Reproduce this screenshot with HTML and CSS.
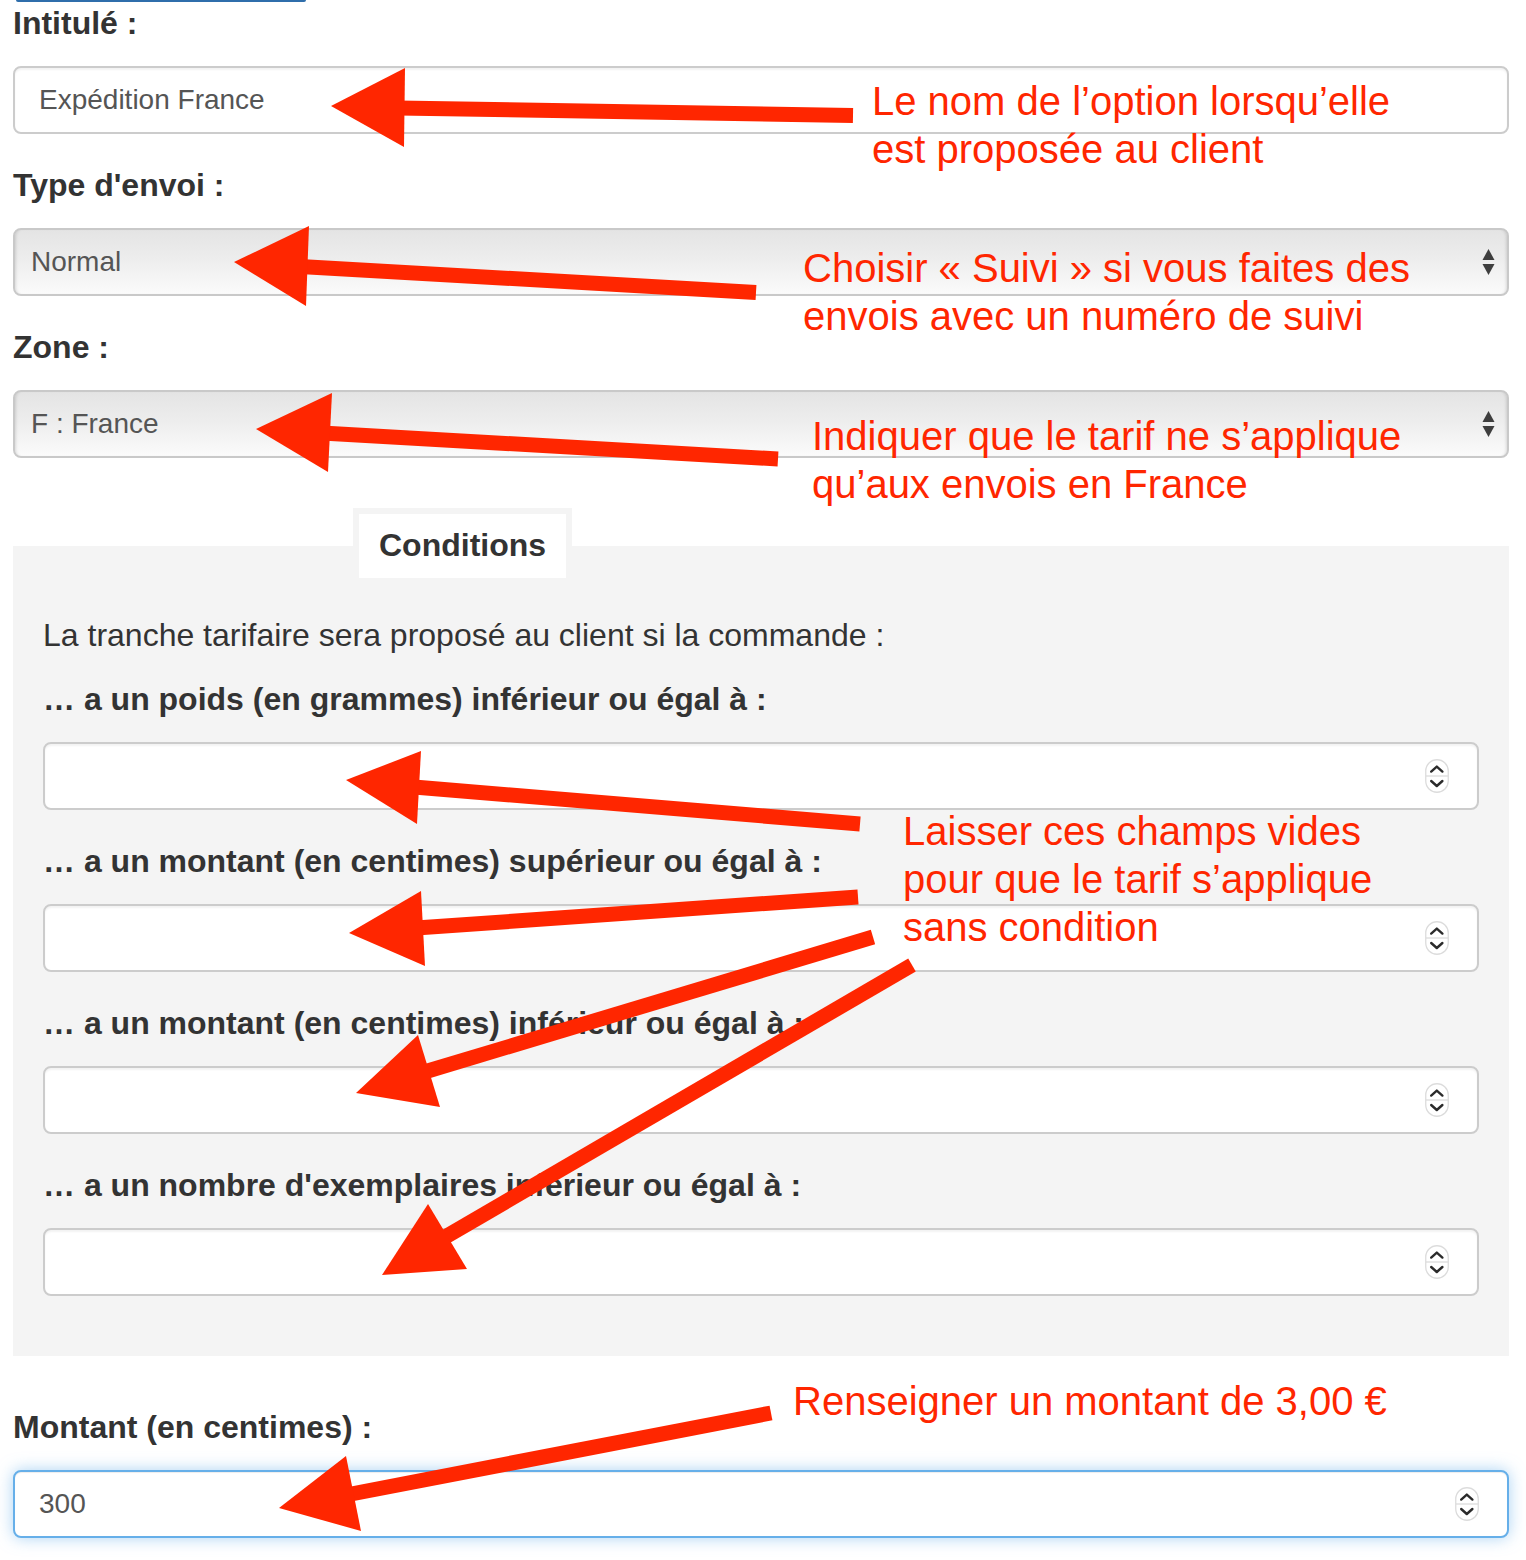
FILE: index.html
```html
<!DOCTYPE html>
<html lang="fr">
<head>
<meta charset="utf-8">
<title>Tranche tarifaire</title>
<link rel="stylesheet" href="styles.css">
</head>
<body>
<div class="page">
  <div class="topbar"></div>

  <div class="form-group">
    <label class="label">Intitulé :</label>
    <div class="control text">Expédition France</div>
  </div>

  <div class="form-group">
    <label class="label">Type d'envoi :</label>
    <div class="control select">
      <span>Normal</span>
      <svg class="caret" width="13" height="27" viewBox="0 0 13 27"><polygon points="0.5,11 6.5,0 12.5,11" /><polygon points="0.5,15 12.5,15 6.5,26" /></svg>
    </div>
  </div>

  <div class="form-group">
    <label class="label">Zone :</label>
    <div class="control select">
      <span>F : France</span>
      <svg class="caret" width="13" height="27" viewBox="0 0 13 27"><polygon points="0.5,11 6.5,0 12.5,11" /><polygon points="0.5,15 12.5,15 6.5,26" /></svg>
    </div>
  </div>

  <section class="panel">
    <h2 class="legend">Conditions</h2>
    <p class="intro">La tranche tarifaire sera proposé au client si la commande :</p>

    <div class="form-group">
      <label class="label">… a un poids (en grammes) inférieur ou égal à :</label>
      <div class="control number">
        <span></span>
        <svg class="spin" width="24" height="34" viewBox="0 0 24 34"><rect x="0.75" y="0.75" width="22.5" height="32.5" rx="11.25" /><line x1="1" y1="17" x2="23" y2="17" /><polyline points="6.2,12.6 11.8,7.6 17.4,12.6" /><polyline points="6.2,22 11.8,27 17.4,22" /></svg>
      </div>
    </div>

    <div class="form-group">
      <label class="label">… a un montant (en centimes) supérieur ou égal à :</label>
      <div class="control number">
        <span></span>
        <svg class="spin" width="24" height="34" viewBox="0 0 24 34"><rect x="0.75" y="0.75" width="22.5" height="32.5" rx="11.25" /><line x1="1" y1="17" x2="23" y2="17" /><polyline points="6.2,12.6 11.8,7.6 17.4,12.6" /><polyline points="6.2,22 11.8,27 17.4,22" /></svg>
      </div>
    </div>

    <div class="form-group">
      <label class="label">… a un montant (en centimes) inférieur ou égal à :</label>
      <div class="control number">
        <span></span>
        <svg class="spin" width="24" height="34" viewBox="0 0 24 34"><rect x="0.75" y="0.75" width="22.5" height="32.5" rx="11.25" /><line x1="1" y1="17" x2="23" y2="17" /><polyline points="6.2,12.6 11.8,7.6 17.4,12.6" /><polyline points="6.2,22 11.8,27 17.4,22" /></svg>
      </div>
    </div>

    <div class="form-group last">
      <label class="label">… a un nombre d'exemplaires inférieur ou égal à :</label>
      <div class="control number">
        <span></span>
        <svg class="spin" width="24" height="34" viewBox="0 0 24 34"><rect x="0.75" y="0.75" width="22.5" height="32.5" rx="11.25" /><line x1="1" y1="17" x2="23" y2="17" /><polyline points="6.2,12.6 11.8,7.6 17.4,12.6" /><polyline points="6.2,22 11.8,27 17.4,22" /></svg>
      </div>
    </div>
  </section>

  <div class="form-group final">
    <label class="label">Montant (en centimes) :</label>
    <div class="control number focus">
      <span class="value">300</span>
      <svg class="spin" width="24" height="34" viewBox="0 0 24 34"><rect x="0.75" y="0.75" width="22.5" height="32.5" rx="11.25" /><line x1="1" y1="17" x2="23" y2="17" /><polyline points="6.2,12.6 11.8,7.6 17.4,12.6" /><polyline points="6.2,22 11.8,27 17.4,22" /></svg>
    </div>
  </div>
</div>

<div class="overlay">
  <svg class="arrows" width="1526" height="1560" viewBox="0 0 1526 1560">
    <g class="arrow">
      <line x1="398" y1="108" x2="853" y2="115.5" stroke-width="15" />
      <polygon points="331,106 405,68 404,147" />
    </g>
    <g class="arrow">
      <line x1="300" y1="266.5" x2="756" y2="292.5" stroke-width="15" />
      <polygon points="234,262 309,226 306,306" />
    </g>
    <g class="arrow">
      <line x1="322" y1="433" x2="778" y2="459" stroke-width="15" />
      <polygon points="256,429 332,393 328,472" />
    </g>
    <g class="arrow">
      <line x1="414" y1="787" x2="860" y2="824" stroke-width="15" />
      <polygon points="346,780 421,751 417,824" />
    </g>
    <g class="arrow">
      <line x1="416" y1="928" x2="858" y2="897" stroke-width="15" />
      <polygon points="349,933 421,891 425,966" />
    </g>
    <g class="arrow">
      <line x1="421" y1="1073" x2="873" y2="937" stroke-width="15" />
      <polygon points="356,1093 418,1035 440,1107" />
    </g>
    <g class="arrow">
      <line x1="440" y1="1240" x2="912" y2="965" stroke-width="15" />
      <polygon points="382,1275 428,1204 467,1269" />
    </g>
    <g class="arrow">
      <line x1="346" y1="1495" x2="771" y2="1413" stroke-width="15" />
      <polygon points="279,1508 346,1456 361,1531" />
    </g>
  </svg>

  <p class="note n1">Le nom de l’option lorsqu’elle<br>est proposée au client</p>
  <p class="note n2">Choisir « Suivi » si vous faites des<br>envois avec un numéro de suivi</p>
  <p class="note n3">Indiquer que le tarif ne s’applique<br>qu’aux envois en France</p>
  <p class="note n4">Laisser ces champs vides<br>pour que le tarif s’applique<br>sans condition</p>
  <p class="note n5">Renseigner un montant de 3,00 €</p>
</div>
</body>
</html>
```

FILE: styles.css
```css
html, body {
  margin: 0;
  padding: 0;
  background: #ffffff;
  overflow: hidden;
}

body {
  position: relative;
  width: 1526px;
  height: 1560px;
  font-family: "Liberation Sans", Arial, Helvetica, sans-serif;
  color: #333333;
}

.page {
  width: 1496px;
  margin-left: 13px;
}

.topbar {
  width: 290px;
  height: 2px;
  margin: 0 0 1px 3px;
  background: #2f6eab;
  border-radius: 0 0 6px 6px;
}

.form-group {
  margin-bottom: 31px;
}

.form-group.last {
  margin-bottom: 0;
}

.form-group.final {
  margin-top: 51px;
  margin-bottom: 0;
}

.label {
  display: block;
  font-size: 32px;
  line-height: 40px;
  font-weight: bold;
  color: #333333;
  margin-bottom: 23px;
  white-space: nowrap;
}

.control {
  box-sizing: border-box;
  height: 68px;
  border: 2px solid #cccccc;
  border-radius: 8px;
  background: #ffffff;
  display: flex;
  align-items: center;
  justify-content: space-between;
  padding: 0 28px 0 24px;
  font-size: 28px;
  color: #555555;
  box-shadow: inset 0 2px 2px rgba(0, 0, 0, 0.05);
}

.control.select {
  padding: 0 12px 0 16px;
  border-color: #c9c9c9;
  background: linear-gradient(to bottom, #e4e4e4 0%, #ededed 45%, #f7f7f7 85%, #fbfbfb 100%);
  box-shadow: inset 3px 0 3px -2px rgba(0, 0, 0, 0.12), inset -3px 0 3px -2px rgba(0, 0, 0, 0.12);
}

.caret polygon {
  fill: #3e3e3e;
}

.control.focus {
  border-color: #66afe9;
  box-shadow: inset 0 1px 1px rgba(0, 0, 0, 0.075), 0 0 16px rgba(102, 175, 233, 0.55);
}

.spin rect {
  fill: #ffffff;
  stroke: #dcdcdc;
  stroke-width: 1.3;
}

.spin line {
  stroke: #dcdcdc;
  stroke-width: 1.3;
}

.spin polyline {
  fill: none;
  stroke: #2b2b2b;
  stroke-width: 2.4;
  stroke-linecap: round;
  stroke-linejoin: round;
}

.panel {
  display: flow-root;
  margin-top: 88px;
  background: #f4f4f4;
  padding: 0 30px 60px;
}

.legend {
  display: table;
  margin: -38px 0 0 310px;
  padding: 11px 20px 13px;
  border: 6px solid #f4f4f4;
  border-bottom: 0;
  background: #ffffff;
  font-size: 32px;
  line-height: 40px;
  font-weight: bold;
  color: #333333;
}

.intro {
  margin: 37px 0 24px;
  font-size: 32px;
  line-height: 40px;
  color: #333333;
  white-space: nowrap;
}

.overlay {
  position: absolute;
  top: 0;
  left: 0;
  width: 1526px;
  height: 1560px;
  pointer-events: none;
}

.arrows {
  position: absolute;
  top: 0;
  left: 0;
}

.arrow line {
  stroke: #ff2600;
  stroke-linecap: butt;
}

.arrow polygon {
  fill: #ff2600;
}

.note {
  position: absolute;
  margin: 0;
  font-size: 40px;
  line-height: 48px;
  color: #ff2600;
  white-space: nowrap;
}

.n1 { left: 872px; top: 77px; }
.n2 { left: 803px; top: 244px; }
.n3 { left: 812px; top: 412px; }
.n4 { left: 903px; top: 807px; }
.n5 { left: 793px; top: 1377px; }
```
